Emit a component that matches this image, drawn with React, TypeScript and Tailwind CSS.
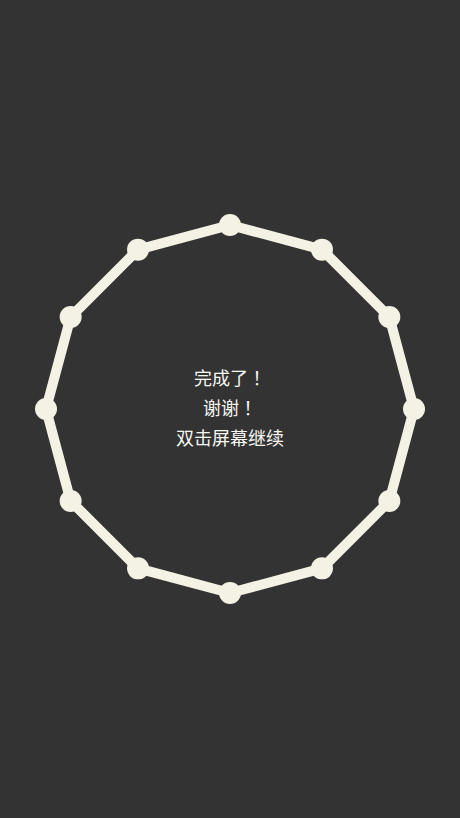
const CX = 200;
const CY = 200;
const R = 184;

const points = Array.from({ length: 12 }, (_, i) => {
  const a = (i * 30 - 90) * (Math.PI / 180);
  return [CX + R * Math.cos(a), CY + R * Math.sin(a)];
});

// centred full-width bang, like the original device font
function Bang() {
  return <span className="[font-family:'Noto_Sans_CJK_TC',sans-serif]">！</span>;
}

export default function App() {
  return (
    <div className="flex h-[818px] w-full items-center justify-center bg-[#333333]">
      <div className="grid place-items-center">
        <svg
          width="400"
          height="400"
          viewBox="0 0 400 400"
          className="col-start-1 row-start-1"
        >
          <polygon
            points={points.map((p) => p.join(",")).join(" ")}
            fill="none"
            stroke="#f4f2e4"
            strokeWidth="10"
            strokeLinejoin="round"
          />
          {points.map(([x, y], i) => (
            <circle key={i} cx={x} cy={y} r="11" fill="#f4f2e4" />
          ))}
        </svg>
        <div className="col-start-1 row-start-1 -mt-[4px] flex flex-col items-center text-[18px] leading-[30px] text-[#f7f7f2] [text-spacing-trim:space-all] [font-family:'Noto_Sans_CJK_SC',sans-serif]">
          <span>完成了<Bang /></span>
          <span>谢谢<Bang /></span>
          <span>双击屏幕继续</span>
        </div>
      </div>
    </div>
  );
}
